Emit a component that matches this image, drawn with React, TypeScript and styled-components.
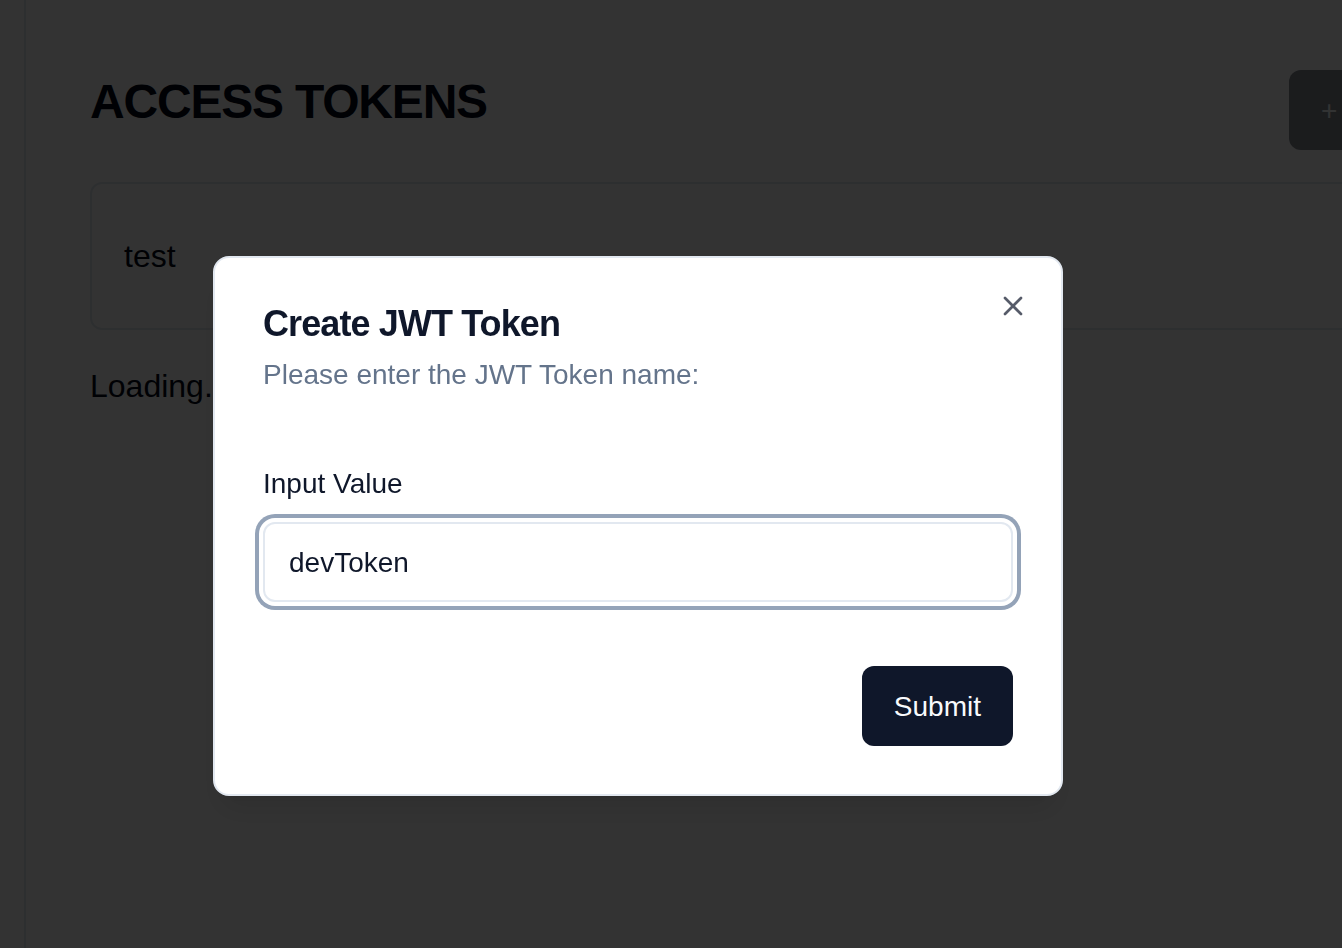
import React from "react";
import styled, { createGlobalStyle } from "styled-components";
import { X } from "lucide-react";

const GlobalStyle = createGlobalStyle`
  *, *::before, *::after { box-sizing: border-box; }
  body {
    margin: 0;
    background: #ffffff;
    color: #020817;
    font-family: "Liberation Sans", Helvetica, Arial, sans-serif;
    font-size: 32px;
    line-height: 48px;
  }
  h1, h2, p { margin: 0; }
  button, input { font: inherit; }
`;

const Page = styled.div`
  display: flex;
  min-height: 100vh;
  overflow: hidden;
`;

const Sidebar = styled.aside`
  flex: none;
  width: 26px;
  border-right: 2px solid #e2e8f0;
`;

const Main = styled.main`
  flex: none;
  width: calc(100% + 134px);
  padding: 70px 0 0 64px;
`;

const Stack = styled.div`
  display: flex;
  flex-direction: column;
  gap: 32px;
`;

const Header = styled.header`
  display: flex;
  align-items: flex-start;
  justify-content: space-between;
`;

const PageTitle = styled.h1`
  font-size: 48px;
  line-height: 64px;
  font-weight: 700;
  letter-spacing: -0.025em;
`;

const Button = styled.button`
  height: 80px;
  padding: 2px 32px 0;
  border: 0;
  border-radius: 12px;
  background: #0f172a;
  color: #f8fafc;
  font-size: 28px;
  line-height: 40px;
  font-weight: 500;
  text-align: left;
  cursor: pointer;

  &:disabled {
    opacity: 0.5;
    cursor: default;
  }
`;

const AddButton = styled(Button)`
  width: 213px;
`;

const TokenCard = styled.section`
  padding: 48px 32px;
  border: 2px solid #e2e8f0;
  border-radius: 12px;
`;

const Overlay = styled.div`
  position: fixed;
  inset: 0;
  display: flex;
  align-items: center;
  justify-content: center;
  padding: 104px 66px 0 0;
  background: rgba(0, 0, 0, 0.8);
`;

const Dialog = styled.div`
  position: relative;
  display: flex;
  flex-direction: column;
  gap: 66px;
  width: 100%;
  max-width: 850px;
  padding: 48px;
  border: 2px solid #e2e8f0;
  border-radius: 16px;
  background: #ffffff;
  box-shadow: 0 20px 30px -6px rgba(0, 0, 0, 0.1), 0 8px 12px -8px rgba(0, 0, 0, 0.1);
`;

const DialogHeader = styled.div`
  display: flex;
  flex-direction: column;
  gap: 12px;
`;

const DialogTitle = styled.h2`
  color: #0f172a;
  font-size: 36px;
  line-height: 36px;
  font-weight: 600;
  letter-spacing: -0.025em;
`;

const DialogDescription = styled.p`
  color: #64748b;
  font-size: 28px;
  line-height: 42px;
`;

const Form = styled.form`
  display: flex;
  flex-direction: column;
  gap: 64px;
`;

const Field = styled.div`
  display: flex;
  flex-direction: column;
  gap: 16px;
`;

const Label = styled.label`
  color: #0f172a;
  font-size: 28px;
  line-height: 44px;
  font-weight: 500;
`;

const TextInput = styled.input`
  width: 100%;
  height: 80px;
  padding: 2px 24px 0;
  border: 2px solid #e2e8f0;
  border-radius: 12px;
  outline: none;
  background: #ffffff;
  box-shadow: 0 0 0 4px #ffffff, 0 0 0 8px #94a3b8;
  color: #0f172a;
  font-size: 28px;
  line-height: 40px;
`;

const Actions = styled.div`
  display: flex;
  justify-content: flex-end;
`;

const CloseButton = styled.button`
  position: absolute;
  top: 32px;
  right: 32px;
  display: flex;
  padding: 0;
  border: 0;
  background: none;
  color: #0f172a;
  opacity: 0.7;
  cursor: pointer;
`;

export default function App() {
  return (
    <>
      <GlobalStyle />
      <Page>
        <Sidebar />
        <Main>
          <Stack>
            <Header>
              <PageTitle>ACCESS TOKENS</PageTitle>
              <AddButton type="button" disabled>
                +
              </AddButton>
            </Header>
            <TokenCard>test</TokenCard>
            <p>Loading...</p>
          </Stack>
        </Main>
      </Page>
      <Overlay>
        <Dialog role="dialog" aria-modal="true" aria-labelledby="dialog-title" aria-describedby="dialog-text">
          <DialogHeader>
            <DialogTitle id="dialog-title">Create JWT Token</DialogTitle>
            <DialogDescription id="dialog-text">Please enter the JWT Token name:</DialogDescription>
          </DialogHeader>
          <Form onSubmit={(event) => event.preventDefault()}>
            <Field>
              <Label htmlFor="token-name">Input Value</Label>
              <TextInput id="token-name" type="text" defaultValue="devToken" />
            </Field>
            <Actions>
              <Button type="submit">Submit</Button>
            </Actions>
          </Form>
          <CloseButton type="button" aria-label="Close">
            <X size={32} />
          </CloseButton>
        </Dialog>
      </Overlay>
    </>
  );
}
